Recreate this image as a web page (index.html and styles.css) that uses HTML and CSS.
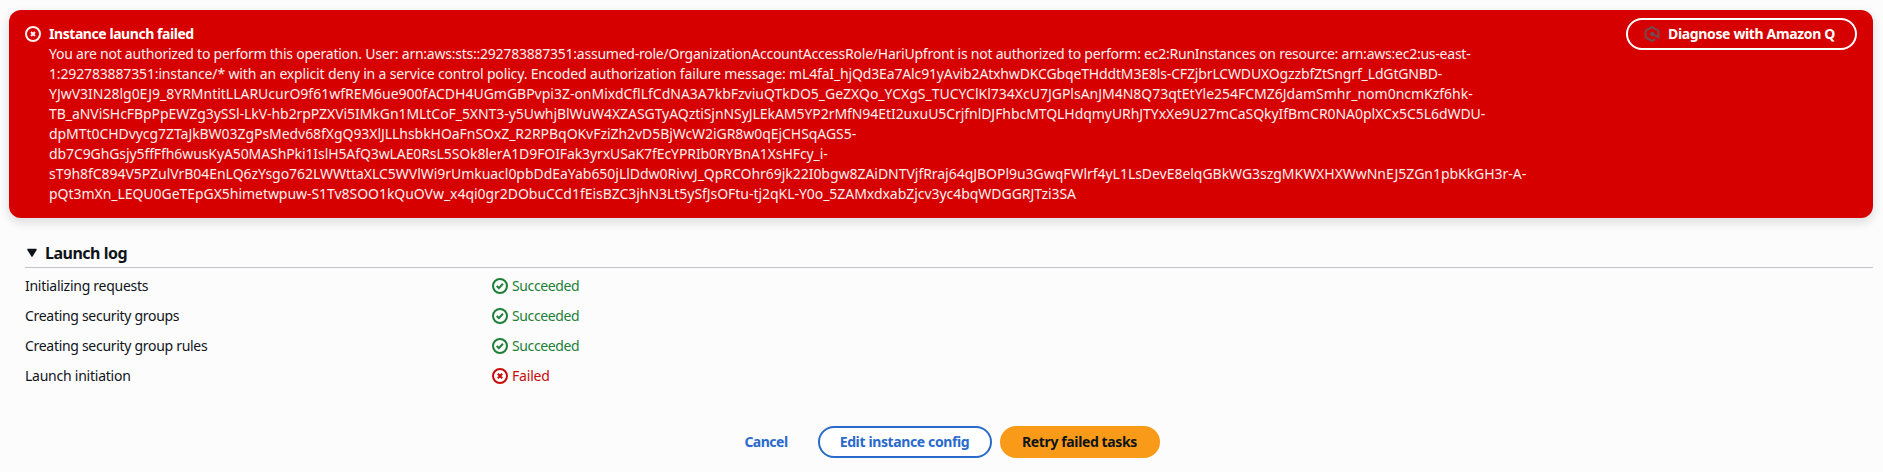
FILE: index.html
```html
<!DOCTYPE html>
<html lang="en">
<head>
<meta charset="utf-8">
<title>Launch an instance</title>
<link rel="stylesheet" href="styles.css">
</head>
<body>
<section class="flash">
  <svg class="icon flash-icon" viewBox="0 0 16 16"><circle cx="8" cy="8" r="7"/><path d="M10 6l-4 4M6 6l4 4"/></svg>
  <div class="flash-body">
    <h2 class="flash-title"><span>Instance launch failed</span></h2>
    <p class="flash-text">
      <span class="l1">You are not authorized to perform this operation. User: arn:aws:sts::292783887351:assumed-role/OrganizationAccountAccessRole/HariUpfront is not authorized to perform: ec2:RunInstances on resource: arn:aws:ec2:us-east-</span>
      <span class="l2">1:292783887351:instance/* with an explicit deny in a service control policy. Encoded authorization failure message: mL4faI_hjQd3Ea7Alc91yAvib2AtxhwDKCGbqeTHddtM3E8ls-CFZjbrLCWDUXOgzzbfZtSngrf_LdGtGNBD-</span>
      <span class="l3">YJwV3IN28lg0EJ9_8YRMntitLLARUcurO9f61wfREM6ue900fACDH4UGmGBPvpi3Z-onMixdCflLfCdNA3A7kbFzviuQTkDO5_GeZXQo_YCXgS_TUCYClKl734XcU7JGPlsAnJM4N8Q73qtEtYle254FCMZ6JdamSmhr_nom0ncmKzf6hk-</span>
      <span class="l4">TB_aNViSHcFBpPpEWZg3ySSl-LkV-hb2rpPZXVi5IMkGn1MLtCoF_5XNT3-y5UwhjBlWuW4XZASGTyAQztiSjnNSyJLEkAM5YP2rMfN94EtI2uxuU5CrjfnlDJFhbcMTQLHdqmyURhJTYxXe9U27mCaSQkyIfBmCR0NA0plXCx5C5L6dWDU-</span>
      <span class="l5">dpMTt0CHDvycg7ZTaJkBW03ZgPsMedv68fXgQ93XlJLLhsbkHOaFnSOxZ_R2RPBqOKvFziZh2vD5BjWcW2iGR8w0qEjCHSqAGS5-</span>
      <span class="l6">db7C9GhGsjy5ffFfh6wusKyA50MAShPki1IslH5AfQ3wLAE0RsL5SOk8lerA1D9FOIFak3yrxUSaK7fEcYPRIb0RYBnA1XsHFcy_i-</span>
      <span class="l7">sT9h8fC894V5PZulVrB04EnLQ6zYsgo762LWWttaXLC5WVlWi9rUmkuacl0pbDdEaYab650jLlDdw0RivvJ_QpRCOhr69jk22I0bgw8ZAiDNTVjfRraj64qJBOPl9u3GwqFWlrf4yL1LsDevE8elqGBkWG3szgMKWXHXWwNnEJ5ZGn1pbKkGH3r-A-</span>
      <span class="l8">pQt3mXn_LEQU0GeTEpGX5himetwpuw-S1Tv8SOO1kQuOVw_x4qi0gr2DObuCCd1fEisBZC3jhN3Lt5ySfJsOFtu-tj2qKL-Y0o_5ZAMxdxabZjcv3yc4bqWDGGRJTzi3SA</span>
    </p>
  </div>
  <button class="btn btn-flash"><svg class="icon q-icon" viewBox="0 0 16 16"><path d="M11.500 13.200L8 15 1.600 11.500V4.500L8 1l6.400 3.500v6.900L8.500 8.200"/><circle class="q-dot" cx="8.200" cy="8" r="2.300"/></svg><span>Diagnose with Amazon Q</span></button>
</section>
<section class="log">
  <h3 class="log-head"><svg class="caret" viewBox="0 0 12 10"><path d="M2 1.500h8L6 8z"/></svg><span>Launch log</span></h3>
  <div class="row"><span class="t1">Initializing requests</span><span class="status ok"><svg class="icon" viewBox="0 0 16 16"><circle cx="8" cy="8" r="7"/><path d="M4.700 8.100l2.200 2 4-4.300"/></svg><span class="s1">Succeeded</span></span></div>
  <div class="row"><span class="t2">Creating security groups</span><span class="status ok"><svg class="icon" viewBox="0 0 16 16"><circle cx="8" cy="8" r="7"/><path d="M4.700 8.100l2.200 2 4-4.300"/></svg><span class="s1">Succeeded</span></span></div>
  <div class="row"><span class="t2">Creating security group rules</span><span class="status ok"><svg class="icon" viewBox="0 0 16 16"><circle cx="8" cy="8" r="7"/><path d="M4.700 8.100l2.200 2 4-4.300"/></svg><span class="s1">Succeeded</span></span></div>
  <div class="row"><span class="t3">Launch initiation</span><span class="status bad"><svg class="icon" viewBox="0 0 16 16"><circle cx="8" cy="8" r="7"/><path d="M10.200 5.800l-4.400 4.400M5.800 5.800l4.400 4.400"/></svg><span class="s2">Failed</span></span></div>
</section>
<footer class="actions">
  <button class="btn btn-link"><span>Cancel</span></button>
  <button class="btn btn-normal"><span>Edit instance config</span></button>
  <button class="btn btn-primary"><span>Retry failed tasks</span></button>
</footer>
</body>
</html>
```
FILE: styles.css
```css
* { box-sizing: border-box; }
body { margin: 0; padding: 10px 10px 0 9px; height: 472px; overflow: hidden; background: #fcfcfc; color: #0f141a; font: 14px/20px "Noto Sans", "Open Sans", sans-serif; }
h2, h3, p { margin: 0; }
.icon { width: 16px; height: 16px; flex: none; fill: none; stroke: currentColor; stroke-width: 2; }
.flash { display: flex; align-items: flex-start; height: 208px; padding: 8px 16px 0 16px; border-radius: 12px; background: #d60000; color: #fff0f0; box-shadow: 0 4px 10px 1px rgba(0, 7, 22, .12); }
.flash-icon { margin-top: 8px; }
.flash-body { flex: 1; margin-left: 8px; padding-top: 6px; }
.flash-title { font-size: 14px; line-height: 20px; color: #fff; letter-spacing: -.44px; }
.flash-text { white-space: nowrap; }
.flash-text span { display: block; width: max-content; }
.l1 { letter-spacing: -.235px; }
.l2 { letter-spacing: -.148px; }
.l3 { letter-spacing: -.014px; }
.l4 { letter-spacing: -.06px; }
.l5 { letter-spacing: -.055px; }
.l6 { letter-spacing: -.096px; }
.l7 { letter-spacing: -.036px; }
.l8 { letter-spacing: -.044px; }
.btn { display: flex; align-items: center; justify-content: center; height: 32px; border: 2px solid transparent; border-radius: 20px; padding: 0; background: none; font: 700 14px/20px "Noto Sans", "Open Sans", sans-serif; letter-spacing: -.38px; white-space: nowrap; }
.btn-flash { width: 231px; padding-right: 4px; gap: 8px; border-color: #fff; color: #fff; letter-spacing: -.36px; }
.q-icon { color: #75494f; stroke-width: 2; }
.q-dot { fill: #75494f; stroke: none; }
.log { padding: 23px 0 0 16px; }
.log-head { display: flex; align-items: center; height: 27px; padding-bottom: 3px; border-bottom: 1px solid #c2c2c8; font-size: 16px; line-height: 24px; letter-spacing: -.5px; }
.caret { width: 12px; height: 10px; margin: 0 7px 0 1px; fill: #0f141a; stroke: #0f141a; stroke-width: 1.5; stroke-linejoin: round; }
.row { display: grid; grid-template-columns: 467px 1fr; height: 30px; align-items: center; white-space: nowrap; }
.log-head + .row { margin-top: 3px; }
.t1 { letter-spacing: -.27px; }
.t2 { letter-spacing: -.3px; }
.t3 { letter-spacing: -.24px; }
.s1 { letter-spacing: -.38px; }
.s2 { letter-spacing: -.2px; }
.status { display: flex; align-items: center; gap: 4px; }
.ok { color: #1d7f37; }
.bad { color: #c70a0a; }
.actions { display: flex; justify-content: center; gap: 8px; padding: 35px 0 0 3px; }
.btn-link { width: 84px; padding-right: 3px; color: #2a6acb; letter-spacing: -.5px; }
.btn-normal { width: 174px; border-color: #2a6acb; background: #fff; color: #2a6acb; }
.btn-primary { width: 160px; background: #f99a18; color: #0f141a; }
```
